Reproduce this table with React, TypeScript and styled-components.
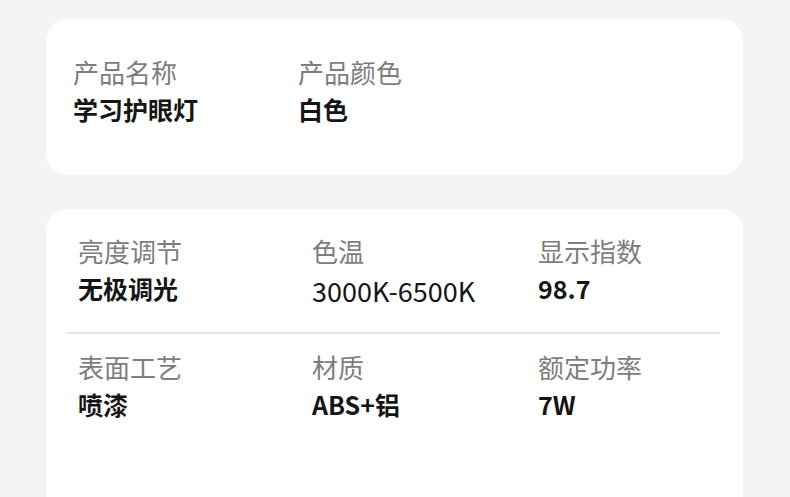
import React from "react";
import styled, { createGlobalStyle } from "styled-components";

const GlobalStyle = createGlobalStyle`
  html, body {
    margin: 0;
    padding: 0;
    background: #f4f4f4;
    font-family: "Noto Sans CJK SC", "Noto Sans", sans-serif;
  }
`;

const Page = styled.div`
  width: 790px;
  height: 497px;
  overflow: hidden;
  box-sizing: border-box;
  padding: 19px 47px 0 46px;
  display: flex;
  flex-direction: column;
  gap: 34px;
`;

const Card = styled.section`
  background: #ffffff;
  border-radius: 22px;
`;

const TopCard = styled(Card)`
  height: 156px;
  box-sizing: border-box;
  padding: 38px 27px 0;
  display: grid;
  grid-template-columns: 225px 225px;
  align-content: start;
`;

const SpecCard = styled(Card)`
  flex: 1;
  border-radius: 22px 22px 0 0;
  padding: 27px 23px 0 20px;
`;

const Row = styled.div`
  display: grid;
  grid-template-columns: 234px 226px 200px;
  padding: 0 0 0 12px;
`;

const Divider = styled.div`
  height: 2px;
  background: #e6e6e6;
  margin: 26px 0 18px;
`;

const Item = styled.div`
  display: flex;
  flex-direction: column;
  gap: 7px;
`;

const Label = styled.div`
  font-size: 26px;
  line-height: 30px;
  color: #7d7d7d;
  font-weight: 400;
  white-space: nowrap;
`;

const Value = styled.div<{ $light?: boolean }>`
  font-size: ${(p) => (p.$light ? "27px" : "25px")};
  line-height: 30px;
  color: #151515;
  font-weight: ${(p) => (p.$light ? 400 : 600)};
  white-space: nowrap;
  ${(p) => p.$light && "padding-top: 3px;"}
`;

type Spec = { label: string; value: string; light?: boolean };

const basics: Spec[] = [
  { label: "产品名称", value: "学习护眼灯" },
  { label: "产品颜色", value: "白色" },
];

const rows: Spec[][] = [
  [
    { label: "亮度调节", value: "无极调光" },
    { label: "色温", value: "3000K-6500K", light: true },
    { label: "显示指数", value: "98.7" },
  ],
  [
    { label: "表面工艺", value: "喷漆" },
    { label: "材质", value: "ABS+铝" },
    { label: "额定功率", value: "7W" },
  ],
];

const SpecItem = ({ label, value, light }: Spec) => (
  <Item>
    <Label>{label}</Label>
    <Value $light={light}>{value}</Value>
  </Item>
);

const App = () => (
  <>
    <GlobalStyle />
    <Page>
      <TopCard>
        {basics.map((s) => (
          <SpecItem key={s.label} {...s} />
        ))}
      </TopCard>
      <SpecCard>
        {rows.map((r, i) => (
          <React.Fragment key={i}>
            {i > 0 && <Divider />}
            <Row>
              {r.map((s) => (
                <SpecItem key={s.label} {...s} />
              ))}
            </Row>
          </React.Fragment>
        ))}
      </SpecCard>
    </Page>
  </>
);

export default App;
